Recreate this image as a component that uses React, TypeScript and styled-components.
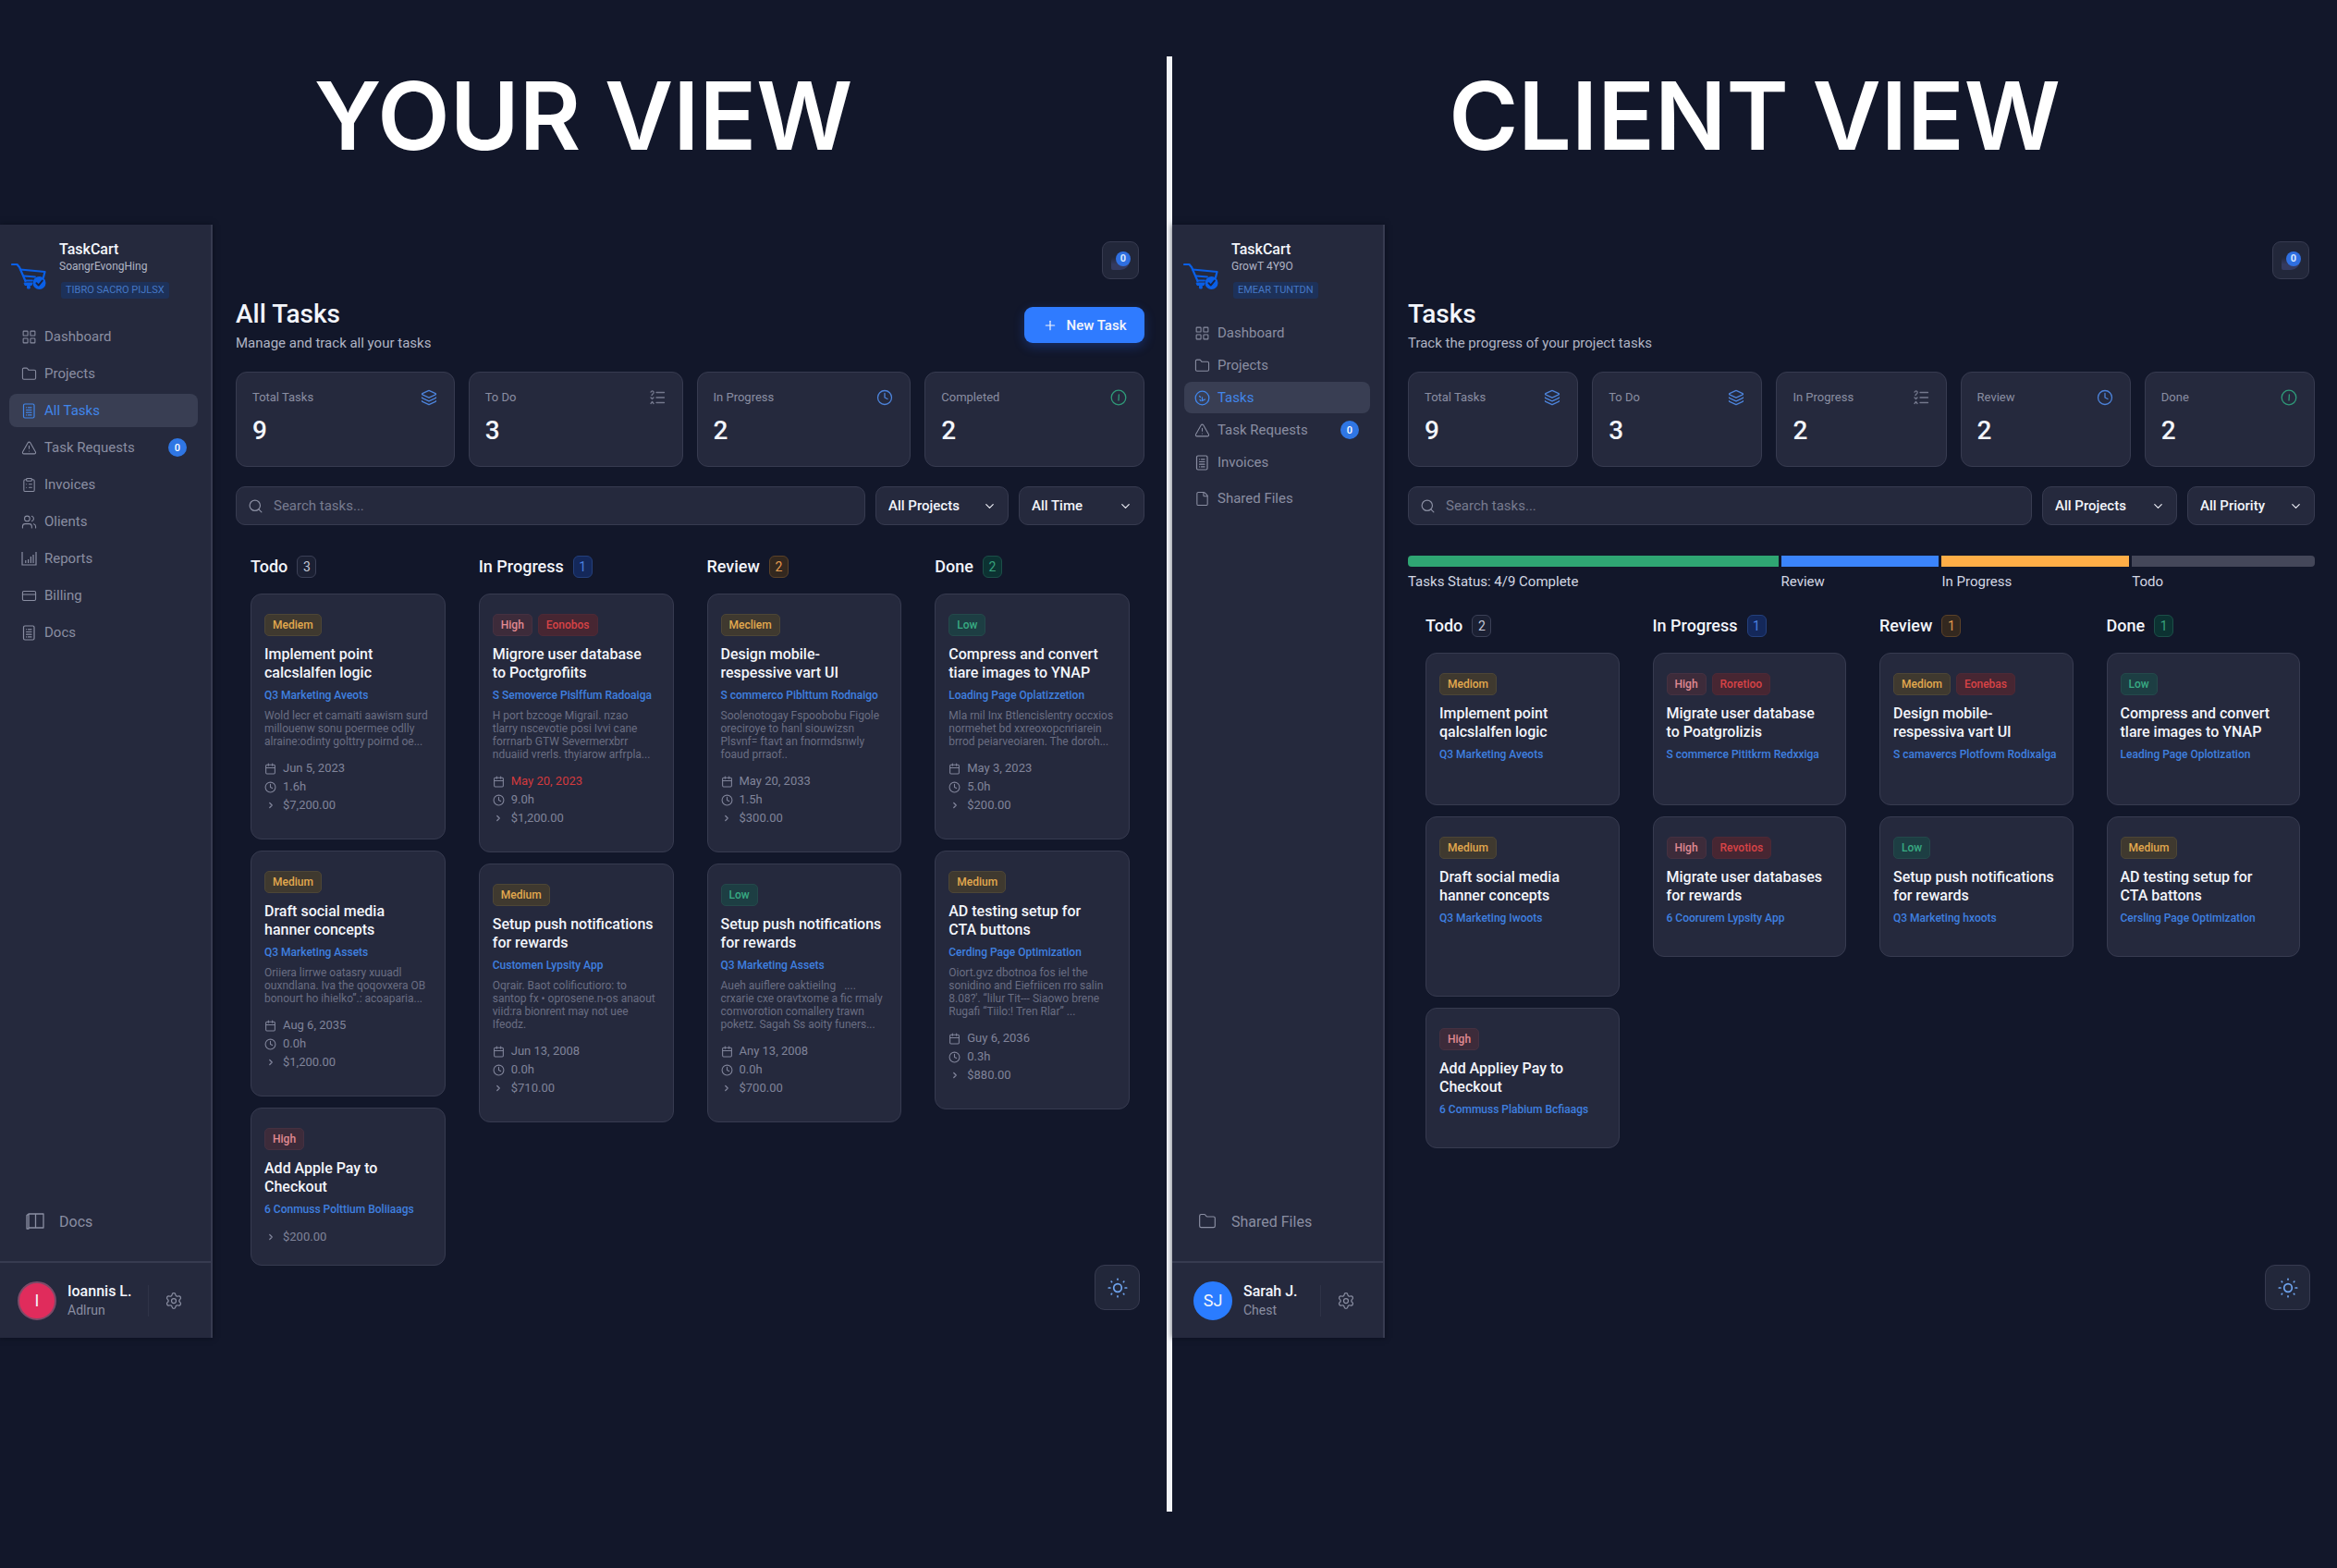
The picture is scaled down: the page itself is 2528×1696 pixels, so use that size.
import React from "react";
import styled, { createGlobalStyle } from "styled-components";
import {
  Calendar,
  ChevronDown,
  ChevronRight,
  ClipboardList,
  Clock,
  CreditCard,
  File,
  Folder,
  Layers,
  LayoutGrid,
  Plus,
  Search,
  Settings,
  TriangleAlert,
  Users,
} from "lucide-react";

const c = {
  page: "#12172a",
  panel: "#25293d",
  panelBorder: "#373b50",
  text: "#f3f5fb",
  soft: "#b0b4c4",
  muted: "#8a8ea2",
  faint: "#6a6e83",
  blue: "#2f7bff",
  link: "#3f80e0",
};

const GlobalStyle = createGlobalStyle`
  *, *::before, *::after { box-sizing: border-box; }
  body {
    margin: 0;
    background: ${c.page};
    color: ${c.text};
    font-family: Roboto, "Liberation Sans", sans-serif;
    font-size: 14px;
  }
  h1, h2, h3, p, ul { margin: 0; padding: 0; }
  ul { list-style: none; }
  button, input, select { font: inherit; color: inherit; }
  button { cursor: pointer; }
  a { color: inherit; text-decoration: none; }
`;

/* ---------- page frame ---------- */

const Page = styled.div`
  display: grid;
  grid-template-columns: minmax(0, 1262fr) 6px minmax(0, 1260fr);
  min-height: 100vh;
`;

const Divider = styled.div`
  margin: 61px 0;
  background: #f2f4f8;
`;

const Pane = styled.section`
  display: flex;
  flex-direction: column;
  padding-bottom: 249px;
`;

const PaneTitle = styled.h1`
  padding: 65px 0 58px;
  font-family: Inter, "Liberation Sans", sans-serif;
  font-size: 102px;
  font-weight: 600;
  line-height: 120px;
  text-align: center;
  color: #ffffff;
`;

const AppFrame = styled.div`
  position: relative;
  display: flex;
  flex: 1;
`;

/* ---------- sidebar ---------- */

const Sidebar = styled.aside`
  display: flex;
  flex-direction: column;
  flex: 0 0 230px;
  background: ${c.panel};
  border-right: 2px solid ${c.panelBorder};
  box-shadow: 0 0 6px rgba(6, 10, 20, 0.6);
`;

const Brand = styled.div`
  display: flex;
  gap: 14px;
  padding: 17px 0 0 12px;
`;

const BrandLogo = styled.svg`
  flex: none;
  width: 38px;
  height: 30px;
  margin-top: 24px;
`;

const BrandName = styled.div`
  font-size: 16px;
  font-weight: 500;
  line-height: 20px;
`;

const BrandNote = styled.div`
  font-size: 12px;
  line-height: 16px;
  color: ${c.soft};
`;

const BrandTag = styled.div`
  display: inline-block;
  margin: 9px 0 0 2px;
  padding: 0 5px;
  border-radius: 3px;
  background: #1d3159;
  font-size: 11px;
  line-height: 18px;
  color: #4678c6;
`;

const NavList = styled.ul<{ $dense?: boolean }>`
  display: flex;
  flex-direction: column;
  gap: ${(p) => (p.$dense ? 1 : 4)}px;
  padding: ${(p) => (p.$dense ? "20px 14px 0 13px" : "23px 14px 0 10px")};
`;

const NavEntry = styled.li<{ $apart?: boolean }>`
  margin-top: ${(p) => (p.$apart ? 4 : 0)}px;
`;

const NavLink = styled.a<{ $active?: boolean; $dense?: boolean }>`
  display: flex;
  align-items: center;
  gap: 8px;
  height: ${(p) => (p.$dense ? 34 : 36)}px;
  padding: 0 12px 0 ${(p) => (p.$dense ? 11 : 13)}px;
  border-radius: 8px;
  background: ${(p) => (p.$active ? "#393e53" : "transparent")};
  color: ${(p) => (p.$active ? "#4186ea" : c.muted)};
  font-size: 15px;
`;

const NavCount = styled.span`
  display: grid;
  place-items: center;
  width: 20px;
  height: 20px;
  margin-left: auto;
  border-radius: 50%;
  background: #2f76e4;
  color: #ffffff;
  font-size: 11px;
  font-weight: 500;
`;

const BottomLink = styled.a`
  display: flex;
  align-items: center;
  gap: 16px;
  height: 40px;
  margin: auto 0 23px;
  padding-left: 28px;
  color: ${c.muted};
  font-size: 16px;
`;

const UserBar = styled.div<{ $inset: number }>`
  display: flex;
  align-items: center;
  gap: 12px;
  height: 83px;
  padding-left: ${(p) => p.$inset}px;
  border-top: 2px solid ${c.panelBorder};
`;

const Avatar = styled.span<{ $color: string; $ring: string }>`
  display: grid;
  place-items: center;
  flex: none;
  width: 42px;
  height: 42px;
  border: 2px solid ${(p) => p.$ring};
  border-radius: 50%;
  background: ${(p) => p.$color};
  font-size: 18px;
`;

const UserText = styled.div`
  flex: 1;
  line-height: 20px;
`;

const UserName = styled.div`
  font-size: 16px;
  font-weight: 500;
`;

const UserRole = styled.div`
  color: ${c.muted};
`;

const GearButton = styled.button`
  display: grid;
  place-items: center;
  width: 68px;
  height: 34px;
  padding: 0 14px 0 0;
  border: 0;
  border-left: 1px solid #2f3347;
  background: none;
  color: ${c.muted};
`;

/* ---------- main column ---------- */

const Main = styled.main`
  display: flex;
  flex: 1;
  flex-direction: column;
  min-width: 0;
  padding: 18px 24px 76px 25px;
`;

const TopBar = styled.div`
  display: flex;
  justify-content: flex-end;
  padding-right: 6px;
`;

const ChatButton = styled.button`
  display: grid;
  place-items: center;
  width: 40px;
  height: 41px;
  padding: 0;
  border: 1px solid ${c.panelBorder};
  border-radius: 9px;
  background: #22273a;
`;

const TitleRow = styled.div`
  display: flex;
  align-items: center;
  justify-content: space-between;
  margin-top: 20px;
`;

const Title = styled.h2`
  font-size: 28px;
  font-weight: 500;
  line-height: 36px;
`;

const Subtitle = styled.p`
  margin-top: 3px;
  font-size: 15px;
  line-height: 20px;
  color: ${c.soft};
`;

const NewTask = styled.button`
  display: flex;
  align-items: center;
  justify-content: center;
  gap: 10px;
  width: 130px;
  height: 39px;
  padding: 0;
  border: 0;
  border-radius: 9px;
  background: ${c.blue};
  box-shadow: 0 4px 12px rgba(40, 100, 240, 0.3);
  font-size: 15px;
  font-weight: 500;
`;

const Stats = styled.div<{ $columns: string }>`
  display: grid;
  grid-template-columns: ${(p) => p.$columns};
  gap: 15px;
  margin-top: 21px;
`;

const StatCard = styled.div`
  padding: 17px 18px 20px 17px;
  border: 1px solid ${c.panelBorder};
  border-radius: 12px;
  background: ${c.panel};
`;

const StatHead = styled.div<{ $tint: string }>`
  display: flex;
  align-items: center;
  justify-content: space-between;
  font-size: 13px;
  line-height: 20px;
  color: ${c.muted};

  svg {
    color: ${(p) => p.$tint};
  }
`;

const StatValue = styled.div`
  margin-top: 8px;
  font-size: 28px;
  font-weight: 500;
  line-height: 36px;
`;

const Filters = styled.div<{ $widths: string }>`
  display: grid;
  grid-template-columns: minmax(0, 1fr) ${(p) => p.$widths};
  gap: 11px;
  margin-top: 21px;
`;

const SearchBox = styled.label`
  display: flex;
  align-items: center;
  gap: 11px;
  height: 42px;
  padding: 0 12px;
  border: 1px solid ${c.panelBorder};
  border-radius: 10px;
  background: ${c.panel};
  color: ${c.muted};
`;

const SearchInput = styled.input`
  flex: 1;
  min-width: 0;
  padding: 0;
  border: 0;
  outline: 0;
  background: none;
  font-size: 15px;

  &::placeholder {
    color: #777b8f;
  }
`;

const SelectBox = styled.label`
  display: grid;
  align-items: center;

  > * {
    grid-area: 1 / 1;
  }

  svg {
    justify-self: end;
    margin-right: 13px;
    pointer-events: none;
  }
`;

const Select = styled.select`
  width: 100%;
  height: 42px;
  padding: 0 13px;
  appearance: none;
  border: 1px solid ${c.panelBorder};
  border-radius: 10px;
  background: ${c.panel};
  font-size: 15px;
  font-weight: 500;
`;

/* ---------- status bar ---------- */

const StatusBar = styled.div`
  display: flex;
  gap: 3px;
  margin-top: 33px;
  margin-bottom: -7px;
`;

const StatusPart = styled.div<{ $share: number }>`
  flex: ${(p) => p.$share} 1 0;
  line-height: 20px;
  color: #d3d7e4;
  font-size: 15px;
  white-space: nowrap;
`;

const StatusFill = styled.div<{ $color: string; $round?: string }>`
  height: 12px;
  margin-bottom: 6px;
  border-radius: ${(p) => p.$round || "0"};
  background: ${(p) => p.$color};
`;

/* ---------- board ---------- */

const Board = styled.div<{ $inset: number }>`
  display: grid;
  grid-template-columns: repeat(4, minmax(0, 1fr));
  align-items: start;
  gap: 36px;
  margin-top: 33px;
  padding: 0 16px 0 ${(p) => p.$inset}px;
`;

const Column = styled.section`
  display: flex;
  flex-direction: column;
  gap: 12px;
`;

const ColumnHead = styled.div`
  display: flex;
  align-items: center;
  gap: 10px;
  margin-bottom: 5px;
`;

const ColumnName = styled.h3`
  font-size: 18px;
  font-weight: 500;
  line-height: 24px;
`;

const tones = {
  gray: { fg: "#c3c7d6", bg: "#1b2033", line: "#3b4056" },
  blue: { fg: "#4a80e0", bg: "#14285a", line: "#24407c" },
  orange: { fg: "#e39a4f", bg: "#33281f", line: "#5c4228" },
  green: { fg: "#37a17c", bg: "#0c3232", line: "#1c4f48" },
};
type Tone = keyof typeof tones;

const ColumnCount = styled.span<{ $tone: Tone }>`
  display: grid;
  place-items: center;
  width: 21px;
  height: 24px;
  border: 1px solid ${(p) => tones[p.$tone].line};
  border-radius: 6px;
  background: ${(p) => tones[p.$tone].bg};
  color: ${(p) => tones[p.$tone].fg};
`;

const Card = styled.article<{ $roomy?: boolean; $minHeight?: number }>`
  min-height: ${(p) => p.$minHeight || 0}px;
  padding: 21px 15px ${(p) => (p.$roomy ? 26 : 20)}px 14px;
  border: 1px solid ${c.panelBorder};
  border-radius: 12px;
  background: ${c.panel};
`;

const Tags = styled.div`
  display: flex;
  gap: 6px;
`;

const levels = {
  medium: { fg: "#e3a94e", bg: "#3f392f", line: "#4d4636" },
  high: { fg: "#e08a92", bg: "#3d2b3a", line: "#453141" },
  alert: { fg: "#d84346", bg: "#472632", line: "#4d2936" },
  low: { fg: "#38aa82", bg: "#1d3e43", line: "#24494b" },
};
type Level = keyof typeof levels;

const Tag = styled.span<{ $level: Level }>`
  padding: 0 8px;
  border: 1px solid ${(p) => levels[p.$level].line};
  border-radius: 5px;
  background: ${(p) => levels[p.$level].bg};
  color: ${(p) => levels[p.$level].fg};
  font-size: 12px;
  font-weight: 500;
  line-height: 22px;
`;

const CardTitle = styled.h4`
  margin: 10px 0 0;
  font-size: 16px;
  font-weight: 500;
  line-height: 20px;
  white-space: pre;
`;

const ProjectLink = styled.a`
  display: block;
  margin-top: 6px;
  color: ${c.link};
  font-size: 12px;
  font-weight: 500;
  line-height: 16px;
  white-space: nowrap;
`;

const Excerpt = styled.p`
  margin-top: 7px;
  color: ${c.faint};
  font-size: 12px;
  line-height: 14px;
  white-space: pre;
`;

const MetaList = styled.ul`
  margin-top: 12px;
`;

const MetaRow = styled.li<{ $late?: boolean }>`
  display: grid;
  grid-template-columns: 13px 1fr;
  align-items: center;
  gap: 7px;
  color: ${(p) => (p.$late ? "#d23a3d" : "#80849a")};
  font-size: 13px;
  line-height: 20px;

  svg {
    justify-self: center;
    color: #80849a;
  }
`;

const ThemeButton = styled.button`
  position: absolute;
  right: 29px;
  bottom: 30px;
  display: grid;
  place-items: center;
  width: 49px;
  height: 49px;
  padding: 0;
  border: 1px solid ${c.panelBorder};
  border-radius: 11px;
  background: #22273a;
  color: #6fa4ee;
`;

/* ---------- drawn icons ---------- */

const CartLogo = () => (
  <BrandLogo viewBox="0 0 38 30" fill="none" stroke="#0a5fe6" strokeWidth="2.2" strokeLinecap="round" strokeLinejoin="round" aria-hidden="true">
    <path d="M1 2h5.500l2.500 3 6.500 15" />
    <path d="M10 7.500 36.500 10l-1.500 6" />
    <path d="M14 14.500 26 15.500M15 19.500h8" strokeWidth="1.800" />
    <path d="M14.500 22h8.500l-.8 2.500h-2v3.500h-2.600v-3.500h-2.300z" fill="#0a5fe6" strokeWidth="1" />
    <circle cx="30.500" cy="22" r="7" fill="#0a5fe6" stroke="none" />
    <path d="m27.400 22.200 2.300 2.400 4.100-5" stroke="#1b2340" strokeWidth="1.900" />
  </BrandLogo>
);

const SheetIcon = () => (
  <svg width="17" height="17" viewBox="0 0 17 17" fill="none" stroke="currentColor" strokeWidth="1.200" strokeLinecap="round" strokeLinejoin="round" aria-hidden="true">
    <rect x="2.500" y="1" width="11.500" height="15" rx="1.500" />
    <path d="M5.500 4.800h.2M7.500 4.800h3.500M5.500 7.500h5.500M5.500 10.200h5.500M5.500 12.900h.2M7.500 12.900h3.500" />
  </svg>
);

const TargetIcon = () => (
  <svg width="17" height="17" viewBox="0 0 17 17" fill="none" stroke="currentColor" strokeWidth="1.300" strokeLinecap="round" aria-hidden="true">
    <circle cx="8.500" cy="8.500" r="7.300" />
    <path d="M5.500 6.500l1 1M8.500 8v3.500M8.500 11.500l3-1.500M6 10.500l1 1" />
  </svg>
);

const ReportsIcon = () => (
  <svg width="17" height="16" viewBox="0 0 17 16" fill="none" stroke="currentColor" strokeWidth="1.200" aria-hidden="true">
    <path d="M1 1v14h15V1M4.800 13v-3M7.600 13V9M10.400 13V6M13 13V4" />
  </svg>
);

const BookIcon = () => (
  <svg width="20" height="18" viewBox="0 0 20 18" fill="none" stroke="currentColor" strokeWidth="1.300" strokeLinejoin="round" aria-hidden="true">
    <path d="M3 1h7.500v15H3zM10.500 1H19v15h-8.500M3 1 1 2.500V17h2.500" />
  </svg>
);

const ChecklistIcon = () => (
  <svg width="18" height="18" viewBox="0 0 18 18" fill="none" stroke="currentColor" strokeWidth="1.300" strokeLinecap="round" strokeLinejoin="round" aria-hidden="true">
    <path d="M8 3.500h8.500M8 9h8.500M8 14.500h8.500M2 3.200a1.600 1.600 0 1 1 2.200 1.800L3 6.500M2 9l1.500 1.500L5 9M2 15.500l1.500-2 1.500 2" />
  </svg>
);

const DoneIcon = () => (
  <svg width="18" height="18" viewBox="0 0 18 18" fill="none" stroke="currentColor" strokeWidth="1.300" strokeLinecap="round" aria-hidden="true">
    <circle cx="9" cy="9" r="7.800" />
    <path d="M9.400 5.800 9 12" />
  </svg>
);

const SunIcon = () => (
  <svg width="22" height="22" viewBox="0 0 22 22" fill="none" stroke="currentColor" strokeWidth="1.700" strokeLinecap="round" aria-hidden="true">
    <circle cx="11" cy="11" r="4.300" />
    <path d="M11 1.300v.8M11 19.900v.8M1.300 11h1.600M19.100 11h1.600M4.200 4.200l.4.4M17.400 17.400l.4.4M4.200 17.800l.4-.4M17.400 4.600l.4-.4" />
  </svg>
);

const ChatBubble = styled.span`
  display: grid;
  width: 20px;
  height: 20px;
  border-radius: 50% 50% 50% 2px;
  background: linear-gradient(#22273a 30%, #343a60 70%);
`;

const ChatCount = styled.span`
  display: grid;
  place-items: center;
  width: 16px;
  height: 16px;
  margin-left: 5px;
  border-radius: 50%;
  background: #2f6fe0;
  color: #d8e8ff;
  font-size: 11px;
  font-weight: 700;
`;

/* ---------- data ---------- */

type NavItem = { label: string; icon: React.ReactNode; active?: boolean; count?: number; apart?: boolean };
type Stat = { label: string; value: number; icon: React.ReactNode; tint: string };
type Task = {
  tags: [Level, string][];
  title: string;
  project: string;
  text?: string;
  date?: string;
  late?: boolean;
  hours?: string;
  price?: string;
  minHeight?: number;
};
type Lane = { name: string; count: number; tone: Tone; tasks: Task[] };

const navIcon = { size: 17, strokeWidth: 1.5 };
const statIcon = { size: 18, strokeWidth: 1.7 };
const tint = { blue: "#4d84dc", gray: "#74788d", green: "#2f9a79" };

const ownerNav: NavItem[] = [
  { label: "Dashboard", icon: <LayoutGrid {...navIcon} /> },
  { label: "Projects", icon: <Folder {...navIcon} /> },
  { label: "All Tasks", icon: <SheetIcon />, active: true },
  { label: "Task Requests", icon: <TriangleAlert {...navIcon} />, count: 0 },
  { label: "Invoices", icon: <ClipboardList {...navIcon} /> },
  { label: "Olients", icon: <Users {...navIcon} /> },
  { label: "Reports", icon: <ReportsIcon /> },
  { label: "Billing", icon: <CreditCard {...navIcon} /> },
  { label: "Docs", icon: <SheetIcon /> },
];

const clientNav: NavItem[] = [
  { label: "Dashboard", icon: <LayoutGrid {...navIcon} /> },
  { label: "Projects", icon: <Folder {...navIcon} /> },
  { label: "Tasks", icon: <TargetIcon />, active: true },
  { label: "Task Requests", icon: <TriangleAlert {...navIcon} />, count: 0 },
  { label: "Invoices", icon: <SheetIcon /> },
  { label: "Shared Files", icon: <File {...navIcon} />, apart: true },
];

const ownerStats: Stat[] = [
  { label: "Total Tasks", value: 9, icon: <Layers {...statIcon} />, tint: tint.blue },
  { label: "To Do", value: 3, icon: <ChecklistIcon />, tint: tint.gray },
  { label: "In Progress", value: 2, icon: <Clock {...statIcon} />, tint: tint.blue },
  { label: "Completed", value: 2, icon: <DoneIcon />, tint: tint.green },
];

const clientStats: Stat[] = [
  { label: "Total Tasks", value: 9, icon: <Layers {...statIcon} />, tint: tint.blue },
  { label: "To Do", value: 3, icon: <Layers {...statIcon} />, tint: tint.blue },
  { label: "In Progress", value: 2, icon: <ChecklistIcon />, tint: tint.gray },
  { label: "Review", value: 2, icon: <Clock {...statIcon} />, tint: tint.blue },
  { label: "Done", value: 2, icon: <DoneIcon />, tint: tint.green },
];

const ownerLanes: Lane[] = [
  {
    name: "Todo",
    count: 3,
    tone: "gray",
    tasks: [
      {
        tags: [["medium", "Mediem"]],
        title: "Implement point\ncalcslalfen logic",
        project: "Q3 Marketing Aveots",
        text: "Wold lecr et camaiti aawism surd\nmillouenw sonu poermee odlly\nalraine:odinty golttry poirnd oe...",
        date: "Jun 5, 2023",
        hours: "1.6h",
        price: "$7,200.00",
      },
      {
        tags: [["medium", "Medium"]],
        title: "Draft social media\nhanner concepts",
        project: "Q3 Marketing Assets",
        text: "Oriiera lirrwe oatasry xuuadl\nouxndlana. Iva the qoqovxera OB\nbonourt ho ihielko”.: acoaparia...",
        date: "Aug 6, 2035",
        hours: "0.0h",
        price: "$1,200.00",
      },
      {
        tags: [["high", "High"]],
        title: "Add Apple Pay to\nCheckout",
        project: "6 Conmuss Polttium Boliiaags",
        price: "$200.00",
      },
    ],
  },
  {
    name: "In Progress",
    count: 1,
    tone: "blue",
    tasks: [
      {
        tags: [["high", "High"], ["alert", "Eonobos"]],
        title: "Migrore user database\nto Poctgrofiits",
        project: "S Semoverce Pislffum Radoaiga",
        text: "H port bzcoge Migrail. nzao\ntlarry nscevotie posi Ivvi cane\nforrnarb GTW Severmerxbrr\nnduaiid vrerls. thyiarow arfrpla...",
        date: "May 20, 2023",
        late: true,
        hours: "9.0h",
        price: "$1,200.00",
      },
      {
        tags: [["medium", "Medium"]],
        title: "Setup push notifications\nfor rewards",
        project: "Customen Lypsity App",
        text: "Oqrair. Baot colificutioro: to\nsantop fx • oprosene.n-os anaout\nviid:ra bionrent may not uee\nIfeodz.",
        date: "Jun 13, 2008",
        hours: "0.0h",
        price: "$710.00",
      },
    ],
  },
  {
    name: "Review",
    count: 2,
    tone: "orange",
    tasks: [
      {
        tags: [["medium", "Mecliem"]],
        title: "Design mobile-\nrespessive vart UI",
        project: "S commerco Piblttum Rodnaigo",
        text: "Soolenotogay Fspoobobu Figole\noreciroye to hanl siouwizsn\nPlsvnf= ftavt an fnormdsnwly\nfoaud prraof..",
        date: "May 20, 2033",
        hours: "1.5h",
        price: "$300.00",
      },
      {
        tags: [["low", "Low"]],
        title: "Setup push notifications\nfor rewards",
        project: "Q3 Marketing Assets",
        text: "Aueh auiflere oaktieilng   ....\ncrxarie cxe oravtxome a fic rmaly\ncomvorotion comallery trawn\npoketz. Sagah Ss aoity funers...",
        date: "Any 13, 2008",
        hours: "0.0h",
        price: "$700.00",
      },
    ],
  },
  {
    name: "Done",
    count: 2,
    tone: "green",
    tasks: [
      {
        tags: [["low", "Low"]],
        title: "Compress and convert\ntiare images to YNAP",
        project: "Loading Page Oplatizzetion",
        text: "Mla rnil Inx Btlencislentry occxios\nnormehet bd xxreoxopcnriarein\nbrrod peiarveoiaren. The doroh...",
        date: "May 3, 2023",
        hours: "5.0h",
        price: "$200.00",
      },
      {
        tags: [["medium", "Medium"]],
        title: "AD testing setup for\nCTA buttons",
        project: "Cerding Page Optimization",
        text: "Oiort.gvz dbotnoa fos iel the\nsonidino and Eiefriicen rro salin\n8.08?'. “lilur Tit--- Siaowo brene\nRugafi “Tiilo:! Tren Rlar” ...",
        date: "Guy 6, 2036",
        hours: "0.3h",
        price: "$880.00",
      },
    ],
  },
];

const clientLanes: Lane[] = [
  {
    name: "Todo",
    count: 2,
    tone: "gray",
    tasks: [
      { tags: [["medium", "Mediom"]], title: "Implement point\nqalcslalfen logic", project: "Q3 Marketing Aveots", minHeight: 165 },
      { tags: [["medium", "Medium"]], title: "Draft social media\nhanner concepts", project: "Q3 Marketing Iwoots", minHeight: 195 },
      { tags: [["high", "High"]], title: "Add Appliey Pay to\nCheckout", project: "6 Commuss Plabium Bcfiaags", minHeight: 152 },
    ],
  },
  {
    name: "In Progress",
    count: 1,
    tone: "blue",
    tasks: [
      { tags: [["high", "High"], ["alert", "Roretioo"]], title: "Migrate user database\nto Poatgrolizis", project: "S commerce Pititkrm Redxxiga", minHeight: 165 },
      { tags: [["high", "High"], ["alert", "Revotios"]], title: "Migrate user databases\nfor rewards", project: "6 Coorurem Lypsity App", minHeight: 152 },
    ],
  },
  {
    name: "Review",
    count: 1,
    tone: "orange",
    tasks: [
      { tags: [["medium", "Mediom"], ["alert", "Eonebas"]], title: "Design mobile-\nrespessiva vart UI", project: "S camavercs Plotfovm Rodixalga", minHeight: 165 },
      { tags: [["low", "Low"]], title: "Setup push notifications\nfor rewards", project: "Q3 Marketing hxoots", minHeight: 152 },
    ],
  },
  {
    name: "Done",
    count: 1,
    tone: "green",
    tasks: [
      { tags: [["low", "Low"]], title: "Compress and convert\ntlare images to YNAP", project: "Leading Page Oplotization", minHeight: 165 },
      { tags: [["medium", "Medium"]], title: "AD testing setup for\nCTA battons", project: "Cersling Page Optimization", minHeight: 152 },
    ],
  },
];

/* ---------- components ---------- */

const metaIcon = { size: 13, strokeWidth: 2 };

function TaskCard({ task }: { task: Task }) {
  return (
    <Card $roomy={Boolean(task.text)} $minHeight={task.minHeight}>
      <Tags>
        {task.tags.map(([level, label]) => (
          <Tag key={label} $level={level}>{label}</Tag>
        ))}
      </Tags>
      <CardTitle>{task.title}</CardTitle>
      <ProjectLink href="#project">{task.project}</ProjectLink>
      {task.text && <Excerpt>{task.text}</Excerpt>}
      {task.price && (
        <MetaList>
          {task.date && <MetaRow $late={task.late}><Calendar {...metaIcon} />{task.date}</MetaRow>}
          {task.hours && <MetaRow><Clock {...metaIcon} />{task.hours}</MetaRow>}
          <MetaRow><ChevronRight size={10} strokeWidth={3} />{task.price}</MetaRow>
        </MetaList>
      )}
    </Card>
  );
}

function TaskBoard({ lanes, inset }: { lanes: Lane[]; inset: number }) {
  return (
    <Board $inset={inset}>
      {lanes.map((lane) => (
        <Column key={lane.name}>
          <ColumnHead>
            <ColumnName>{lane.name}</ColumnName>
            <ColumnCount $tone={lane.tone}>{lane.count}</ColumnCount>
          </ColumnHead>
          {lane.tasks.map((task) => <TaskCard key={task.title} task={task} />)}
        </Column>
      ))}
    </Board>
  );
}

type SideProps = {
  note: string;
  tag: string;
  nav: NavItem[];
  dense?: boolean;
  bottom: { label: string; icon: React.ReactNode };
  user: { name: string; role: string; initials: string; color: string; ring: string; inset: number };
};

function Side({ note, tag, nav, dense, bottom, user }: SideProps) {
  return (
    <Sidebar>
      <Brand>
        <CartLogo />
        <div>
          <BrandName>TaskCart</BrandName>
          <BrandNote>{note}</BrandNote>
          <BrandTag>{tag}</BrandTag>
        </div>
      </Brand>
      <nav>
        <NavList $dense={dense}>
          {nav.map((item) => (
            <NavEntry key={item.label} $apart={item.apart}>
              <NavLink href="#nav" $active={item.active} $dense={dense}>
                {item.icon}
                {item.label}
                {item.count !== undefined && <NavCount>{item.count}</NavCount>}
              </NavLink>
            </NavEntry>
          ))}
        </NavList>
      </nav>
      <BottomLink href="#more">{bottom.icon}{bottom.label}</BottomLink>
      <UserBar $inset={user.inset}>
        <Avatar $color={user.color} $ring={user.ring}>{user.initials}</Avatar>
        <UserText>
          <UserName>{user.name}</UserName>
          <UserRole>{user.role}</UserRole>
        </UserText>
        <GearButton type="button" aria-label="Settings"><Settings size={20} strokeWidth={1.5} /></GearButton>
      </UserBar>
    </Sidebar>
  );
}

function StatRow({ stats, columns }: { stats: Stat[]; columns: string }) {
  return (
    <Stats $columns={columns}>
      {stats.map((s) => (
        <StatCard key={s.label}>
          <StatHead $tint={s.tint}>{s.label}{s.icon}</StatHead>
          <StatValue>{s.value}</StatValue>
        </StatCard>
      ))}
    </Stats>
  );
}

function FilterRow({ widths, options }: { widths: string; options: string[] }) {
  return (
    <Filters $widths={widths}>
      <SearchBox>
        <Search size={17} strokeWidth={1.7} />
        <SearchInput type="text" placeholder="Search tasks..." aria-label="Search tasks" />
      </SearchBox>
      {options.map((label) => (
        <SelectBox key={label}>
          <Select aria-label={label}><option>{label}</option></Select>
          <ChevronDown size={15} strokeWidth={1.8} />
        </SelectBox>
      ))}
    </Filters>
  );
}

const Chat = () => (
  <TopBar>
    <ChatButton type="button" aria-label="Messages">
      <ChatBubble><ChatCount>0</ChatCount></ChatBubble>
    </ChatButton>
  </TopBar>
);

const Theme = () => (
  <ThemeButton type="button" aria-label="Switch theme"><SunIcon /></ThemeButton>
);

export default function App() {
  return (
    <>
      <GlobalStyle />
      <Page>
        <Pane>
          <PaneTitle>YOUR VIEW</PaneTitle>
          <AppFrame>
            <Side
              note="SoangrEvongHing"
              tag="TIBRO SACRO PIJLSX"
              nav={ownerNav}
              bottom={{ label: "Docs", icon: <BookIcon /> }}
              user={{ name: "Ioannis L.", role: "Adlrun", initials: "I", color: "#e02c5c", ring: "#7d4a68", inset: 19 }}
            />
            <Main>
              <Chat />
              <TitleRow>
                <div>
                  <Title>All Tasks</Title>
                  <Subtitle>Manage and track all your tasks</Subtitle>
                </div>
                <NewTask type="button"><Plus size={16} strokeWidth={1.8} />New Task</NewTask>
              </TitleRow>
              <StatRow stats={ownerStats} columns="237fr 232fr 232fr 238fr" />
              <FilterRow widths="144px 136px" options={["All Projects", "All Time"]} />
              <TaskBoard lanes={ownerLanes} inset={16} />
            </Main>
            <Theme />
          </AppFrame>
        </Pane>
        <Divider />
        <Pane>
          <PaneTitle>CLIENT VIEW</PaneTitle>
          <AppFrame>
            <Side
              dense
              note="GrowT 4Y9O"
              tag="EMEAR TUNTDN"
              nav={clientNav}
              bottom={{ label: "Shared Files", icon: <Folder size={20} strokeWidth={1.4} /> }}
              user={{ name: "Sarah J.", role: "Chest", initials: "SJ", color: "#2a7cff", ring: "#2a7cff", inset: 23 }}
            />
            <Main>
              <Chat />
              <TitleRow>
                <div>
                  <Title>Tasks</Title>
                  <Subtitle>Track the progress of your project tasks</Subtitle>
                </div>
              </TitleRow>
              <StatRow stats={clientStats} columns="repeat(5, minmax(0, 1fr))" />
              <FilterRow widths="146px 138px" options={["All Projects", "All Priority"]} />
              <StatusBar>
                <StatusPart $share={401}><StatusFill $color="#2fa673" $round="4px 0 0 4px" />Tasks Status: 4/9 Complete</StatusPart>
                <StatusPart $share={171}><StatusFill $color="#3b84fb" />Review</StatusPart>
                <StatusPart $share={203}><StatusFill $color="#ffae47" />In Progress</StatusPart>
                <StatusPart $share={198}><StatusFill $color="#444759" $round="0 4px 4px 0" />Todo</StatusPart>
              </StatusBar>
              <TaskBoard lanes={clientLanes} inset={19} />
            </Main>
            <Theme />
          </AppFrame>
        </Pane>
      </Page>
    </>
  );
}
